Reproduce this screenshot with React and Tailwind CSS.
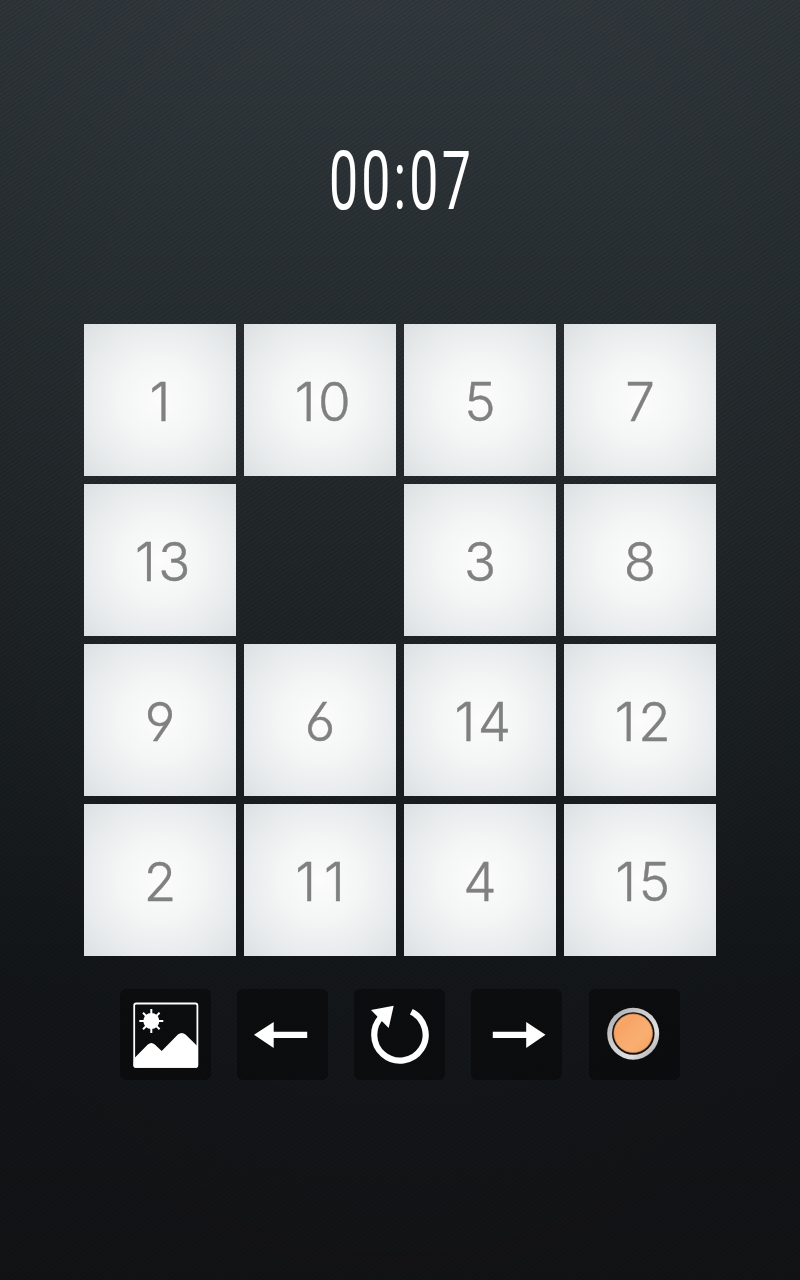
import { useState } from 'react'
import clsx from 'clsx'

const START_TILES = [1, 10, 5, 7, 13, null, 3, 8, 9, 6, 14, 12, 2, 11, 4, 15]

function formatTime(seconds) {
  const mm = String(Math.floor(seconds / 60)).padStart(2, '0')
  const ss = String(seconds % 60).padStart(2, '0')
  return `${mm}:${ss}`
}

function PictureIcon() {
  return (
    <svg viewBox="0.5 0.5 91 91" className="w-full h-full">
      <rect x="14.7" y="15" width="63.2" height="63.4" rx="2" fill="none" stroke="#fff" strokeWidth="1.8" />
      <path d="M14.5 70 L28.3 56 Q31.8 53 35.3 56 L42.2 62.6 L58.4 46 Q62.2 42.8 66 46 L78.3 58 V77 Q78.3 79.2 76 79.2 H16.8 Q14 79.2 14 77 Z" fill="#fff" />
      <circle cx="31.8" cy="32.5" r="8" fill="#fff" />
      <path
        d="M31.8 20.5 V44.5 M19.8 32.5 H43.8 M23.5 24.2 L40.1 40.8 M40.1 24.2 L23.5 40.8"
        stroke="#fff"
        strokeWidth="2"
      />
    </svg>
  )
}

function LeftIcon() {
  return (
    <svg viewBox="0.5 0.5 91 91" className="w-full h-full">
      <path d="M17.5 46.3 L37.2 33.6 V43.2 H70.7 V49.5 H37.2 V59.4 Z" fill="#fff" />
    </svg>
  )
}

function RightIcon() {
  return (
    <svg viewBox="0.5 0.5 91 91" className="w-full h-full">
      <path d="M75 46.3 L55.7 33.6 V43.2 H22.3 V49.5 H55.7 V59.4 Z" fill="#fff" />
    </svg>
  )
}

function RestartIcon() {
  return (
    <svg viewBox="0.5 0.5 91 91" className="w-full h-full">
      <path d="M57.8 23.3 A25.7 25.7 0 1 1 29.2 27.3" fill="none" stroke="#fff" strokeWidth="6.2" />
      <path d="M17.5 21.6 L40.2 17.2 L35.2 39.5 Z" fill="#fff" />
    </svg>
  )
}

function ColorIcon() {
  return (
    <svg viewBox="0.5 0.5 91 91" className="w-full h-full">
      <defs>
        <linearGradient id="ring" x1="0" y1="0" x2="1" y2="1">
          <stop offset="0" stopColor="#a9a9a9" />
          <stop offset="0.35" stopColor="#c9c9c9" />
          <stop offset="0.7" stopColor="#e0e0e0" />
          <stop offset="1" stopColor="#9a9a9a" />
        </linearGradient>
        <linearGradient id="knob" x1="0" y1="0" x2="1" y2="1">
          <stop offset="0" stopColor="#fbb57c" />
          <stop offset="0.25" stopColor="#f7a465" />
          <stop offset="0.65" stopColor="#f9af72" />
          <stop offset="1" stopColor="#f3a05c" />
        </linearGradient>
      </defs>
      <circle cx="44.7" cy="45.2" r="26" fill="url(#ring)" />
      <circle cx="44.8" cy="45" r="21.3" fill="#17110d" />
      <circle cx="44.7" cy="44.8" r="19.3" fill="url(#knob)" stroke="#c98a59" strokeWidth="0.7" />
    </svg>
  )
}

const BUTTONS = [
  { label: 'Picture', Icon: PictureIcon },
  { label: 'Undo', Icon: LeftIcon },
  { label: 'Restart', Icon: RestartIcon },
  { label: 'Redo', Icon: RightIcon },
  { label: 'Color', Icon: ColorIcon },
]

function Tile({ value }) {
  if (value === null) return <div />

  return (
    <button className="flex items-center justify-center bg-[radial-gradient(circle_at_center,#fcfcfc_0%,#f4f5f5_38%,#e8ebec_72%,#dce0e2_100%)] font-['Inter',sans-serif] font-light text-[53px] leading-none [font-feature-settings:'cv03','cv04'] [-webkit-text-stroke:0.4px_#808080] text-[#808080]">
      {/* the narrow 1 needs extra room to keep the columns even */}
      <span className={clsx('pt-1', value > 9 && 'pl-2', value === 11 ? 'tracking-[8px]' : value > 9 && 'tracking-[2.5px]')}>
        {value}
      </span>
    </button>
  )
}

export default function App() {
  const [tiles] = useState(START_TILES)
  const [seconds] = useState(7)

  return (
    <div className="w-full h-screen overflow-hidden bg-[repeating-linear-gradient(145deg,rgba(0,0,0,0.14)_0px,rgba(0,0,0,0)_1.8px,rgba(0,0,0,0.14)_3.6px),radial-gradient(ellipse_75%_65%_at_50%_35%,rgba(0,0,0,0)_50%,rgba(0,0,0,0.12)_100%),linear-gradient(180deg,#343b40_0%,#2b3236_18%,#23292c_40%,#1c2124_58%,#15191c_75%,#15181b_85%,#151618_100%)]">
      <div className="flex flex-col items-center">
        <div className="mt-[139px] h-[84px] flex items-center justify-center pl-[5px] font-['Roboto',sans-serif] text-[81px] leading-none tracking-[5px] text-white scale-x-[0.64]">
          {formatTime(seconds)}
        </div>

        <div className="mt-[101px] grid grid-cols-4 grid-rows-4 gap-2 w-[632px] h-[632px]">
          {tiles.map((value, i) => (
            <Tile key={i} value={value} />
          ))}
        </div>

        <div className="mt-[33px] mr-px flex justify-between w-[560px]">
          {BUTTONS.map(({ label, Icon }) => (
            <button key={label} aria-label={label} className="w-[91px] h-[91px] rounded-md bg-black/40">
              <Icon />
            </button>
          ))}
        </div>
      </div>
    </div>
  )
}
